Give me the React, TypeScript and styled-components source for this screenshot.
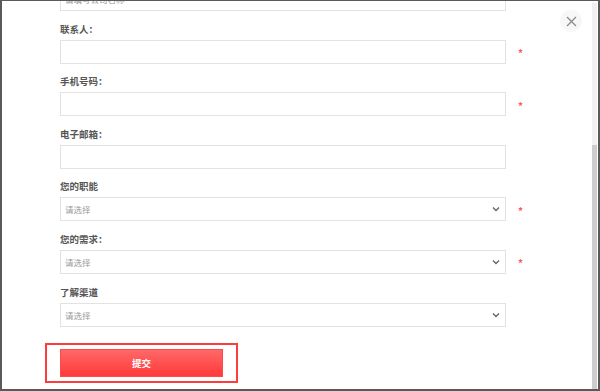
import React from "react";
import styled, { createGlobalStyle } from "styled-components";

const Global = createGlobalStyle`
  html, body { margin: 0; padding: 0; background: #fff; }
  body { font-family: "Noto Sans CJK SC", "Liberation Sans", sans-serif; }
  * { box-sizing: border-box; }
`;

const Frame = styled.div`
  width: 600px;
  height: 391px;
  border-style: solid;
  border-color: #5a5a5a;
  border-width: 1px 2px 2px 2px;
  display: flex;
  position: relative;
  overflow: hidden;
  background: #fff;
`;

const Viewport = styled.div`
  flex: 1;
  overflow: hidden;
`;

const Form = styled.div`
  display: flex;
  flex-direction: column;
  padding-left: 58px;
  margin-top: -14px;
`;

const Field = styled.div`
  display: flex;
  flex-direction: column;
  gap: 3px;
  margin-bottom: 9.6px;
`;

const Label = styled.div`
  height: 16px;
  line-height: 16px;
  font-size: 9.5px;
  font-weight: 700;
  color: #555;
`;

const Row = styled.div`
  display: flex;
  align-items: center;
`;

const Box = styled.div<{ $select?: boolean }>`
  width: 446px;
  height: 24px;
  border: 1px solid #e2e2e2;
  background: #fff;
  display: flex;
  align-items: center;
  justify-content: space-between;
  padding: 0 5px 0 4px;
  font-size: 8.5px;
  color: #999;
`;

const Star = styled.span`
  margin-left: 12px;
  font-size: 10px;
  font-weight: 700;
  color: #ff5a5a;
  line-height: 1;
  padding-top: 3px;
`;

const Highlight = styled.div`
  margin-left: -15px;
  margin-top: 7px;
  width: 193px;
  height: 40px;
  border: 2px solid #ff3b3b;
  padding: 4px 13px;
`;

const Submit = styled.button`
  width: 163px;
  height: 28px;
  border: 1px solid #ff4a4a;
  background: linear-gradient(#ff6868, #ff3a3a);
  color: #fff;
  font-family: inherit;
  font-size: 9.5px;
  font-weight: 700;
  display: flex;
  align-items: center;
  justify-content: center;
  padding: 0;
`;

const ScrollTrack = styled.div`
  width: 5px;
  margin: 2px 1px 0 0;
  background: #f1f1f1;
  display: flex;
  flex-direction: column;
  justify-content: flex-end;
`;

const Thumb = styled.div`
  height: 244px;
  background: #cdcdcd;
`;

const Close = styled.div`
  position: absolute;
  top: 9px;
  left: 558px;
  width: 22px;
  height: 22px;
  border-radius: 50%;
  background: #f7f7f7;
  display: flex;
  align-items: center;
  justify-content: center;
`;

const Chevron = () => (
  <svg width="8" height="6" viewBox="0 0 8 6">
    <path d="M1 1.5 L4 4.5 L7 1.5" fill="none" stroke="#666" strokeWidth="1.4" />
  </svg>
);

type F = { label: string; select?: boolean; required?: boolean };

const fields: F[] = [
  { label: "联系人：", required: true },
  { label: "手机号码：", required: true },
  { label: "电子邮箱：" },
  { label: "您的职能", select: true, required: true },
  { label: "您的需求：", select: true, required: true },
  { label: "了解渠道", select: true },
];

export default function App() {
  return (
    <>
      <Global />
      <Frame>
        <Viewport>
          <Form>
            <Field>
              <Row>
                <Box>请填写公司名称</Box>
              </Row>
            </Field>
            {fields.map((f) => (
              <Field key={f.label}>
                <Label>{f.label}</Label>
                <Row>
                  <Box $select={f.select}>
                    {f.select ? (
                      <>
                        <span>请选择</span>
                        <Chevron />
                      </>
                    ) : null}
                  </Box>
                  {f.required ? <Star>*</Star> : null}
                </Row>
              </Field>
            ))}
            <Highlight>
              <Submit>提交</Submit>
            </Highlight>
          </Form>
        </Viewport>
        <ScrollTrack>
          <Thumb />
        </ScrollTrack>
        <Close>
          <svg width="11" height="11" viewBox="0 0 11 11">
            <path d="M1 1 L10 10 M10 1 L1 10" stroke="#8a8a8a" strokeWidth="1.3" />
          </svg>
        </Close>
      </Frame>
    </>
  );
}
